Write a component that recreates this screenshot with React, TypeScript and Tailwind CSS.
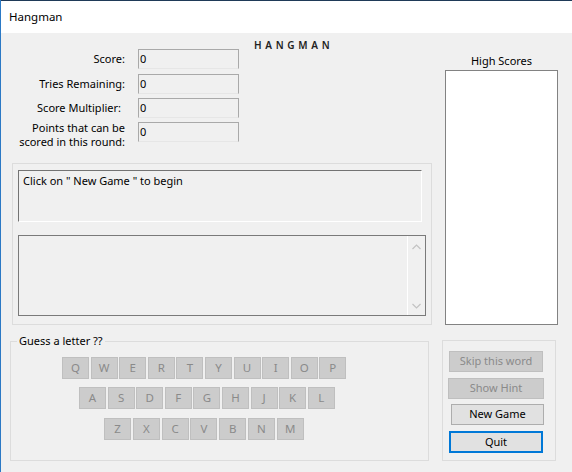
import React from "react";

const font = { fontFamily: '"Noto Sans", "Open Sans", Arial, sans-serif' };

const row1 = ["Q", "W", "E", "R", "T", "Y", "U", "I", "O", "P"];
const row2 = ["A", "S", "D", "F", "G", "H", "J", "K", "L"];
const row3 = ["Z", "X", "C", "V", "B", "N", "M"];

function Key({ k }: { k: string }) {
  return (
    <div className="w-[27px] h-[22px] bg-[#cccccc] border border-[#bfbfbf] flex items-center justify-center text-[11.5px] text-[#8a8a8a] leading-none">
      {k}
    </div>
  );
}

function StatBox() {
  return (
    <div className="w-[101px] h-[20px] bg-[#f0f0f0] border border-[#a9a9a9] border-b-[#e6e6e6] pl-[1px] text-[11px] leading-[17px] text-black">
      0
    </div>
  );
}

export default function App() {
  return (
    <div
      style={font}
      className="w-[572px] h-[472px] bg-[#f0f0f0] overflow-hidden border-l border-[#2b79c5] flex flex-col text-[11px] text-black"
    >
      {/* title bar */}
      <div className="h-[33px] bg-white border-t border-[#1f3a58] flex items-center pl-[8px] shrink-0">
        <span className="text-[11.5px]">Hangman</span>
      </div>

      <div className="flex flex-row flex-1">
        {/* left column */}
        <div className="w-[439px] flex flex-col">
          {/* top section */}
          <div className="h-[130px] flex flex-row">
            <div className="flex flex-col pt-[16px]">
              <div className="flex flex-row items-center h-[20px]">
                <div className="w-[124px] text-right">Score:</div>
                <div className="ml-[13px]"><StatBox /></div>
              </div>
              <div className="flex flex-row items-center h-[20px] mt-[5px]">
                <div className="w-[124px] text-right">Tries Remaining:</div>
                <div className="ml-[13px]"><StatBox /></div>
              </div>
              <div className="flex flex-row items-center h-[20px] mt-[4px]">
                <div className="w-[124px] text-right pr-[4px]">Score Multiplier:</div>
                <div className="ml-[13px]"><StatBox /></div>
              </div>
              <div className="flex flex-row items-start h-[20px] mt-[4px]">
                <div className="w-[124px] text-right flex flex-col -mt-[1px] leading-[14px]">
                  <div>Points that can be</div>
                  <div>scored in this round:</div>
                </div>
                <div className="ml-[13px]"><StatBox /></div>
              </div>
            </div>
            <div className="ml-[15px] pt-[6px] text-[10px] leading-[12px] font-semibold tracking-[3.7px] text-[#222]">
              HANGMAN
            </div>
          </div>

          {/* message group */}
          <div className="ml-[11px] w-[420px] h-[162px] border border-[#dcdcdc] flex flex-col">
            <div className="ml-[5px] mt-[6px] w-[404px] h-[52px] border-t border-l border-[#737373] border-b border-r border-b-white border-r-white pl-[4px] pt-[2px]">
              Click on " New Game " to begin
            </div>
            <div className="ml-[5px] mt-[13px] w-[408px] h-[81px] border border-[#7a7a7a] flex flex-row justify-end">
              <div className="w-[18px] h-full border-l border-white flex flex-col items-center justify-between pt-[8px] pb-[6px]">
                <svg width="9" height="6" viewBox="0 0 9 6">
                  <path d="M0.5 5 L4.5 1 L8.5 5" fill="none" stroke="#c2c2c2" strokeWidth="1.2" />
                </svg>
                <svg width="9" height="6" viewBox="0 0 9 6">
                  <path d="M0.5 1 L4.5 5 L8.5 1" fill="none" stroke="#c2c2c2" strokeWidth="1.2" />
                </svg>
              </div>
            </div>
          </div>

          {/* guess group */}
          <div className="ml-[9px] mt-[16px] w-[419px] h-[120px] border border-[#dcdcdc] relative flex flex-col">
            <div className="absolute -top-[8px] left-[6px] bg-[#f0f0f0] px-[2px] leading-[14px]">
              Guess a letter ??
            </div>
            <div className="flex flex-row gap-[1.6px] ml-[51px] mt-[15px]">
              {row1.map((k) => (
                <Key key={k} k={k} />
              ))}
            </div>
            <div className="flex flex-row gap-[1.6px] ml-[68px] mt-[8px]">
              {row2.map((k) => (
                <Key key={k} k={k} />
              ))}
            </div>
            <div className="flex flex-row gap-[1.8px] ml-[93px] mt-[9px]">
              {row3.map((k) => (
                <Key key={k} k={k} />
              ))}
            </div>
          </div>
        </div>

        {/* right column */}
        <div className="flex flex-col w-[132px]">
          <div className="ml-[5px] w-[113px] text-center mt-[21px] leading-[14px]">High Scores</div>
          <div className="ml-[5px] mt-[2px] w-[113px] h-[255px] bg-white border border-[#828282]"></div>
          <div className="ml-[2px] mt-[15px] w-[114px] h-[121px] border border-[#dcdcdc] flex flex-col">
            <div className="ml-[6px] mt-[10px] w-[94px] h-[21px] bg-[#cccccc] border border-[#bfbfbf] flex items-center justify-center text-[#8a8a8a]">
              Skip this word
            </div>
            <div className="ml-[5px] mt-[6px] w-[96px] h-[21px] bg-[#cccccc] border border-[#bfbfbf] flex items-center justify-center text-[#8a8a8a]">
              Show Hint
            </div>
            <div className="ml-[8px] mt-[5px] w-[93px] h-[21px] bg-[#e1e1e1] border border-[#adadad] flex items-center justify-center">
              New Game
            </div>
            <div className="ml-[6px] mt-[6px] w-[94px] h-[22px] bg-[#e1e1e1] border-2 border-[#0078d7] flex items-center justify-center">
              Quit
            </div>
          </div>
        </div>
      </div>
    </div>
  );
}
